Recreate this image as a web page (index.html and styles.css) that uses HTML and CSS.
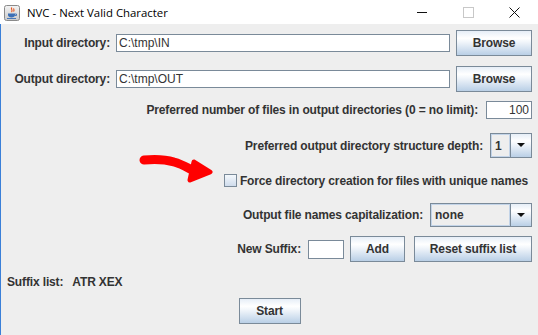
FILE: index.html
```html
<!DOCTYPE html>
<html lang="en">
<head>
    <meta charset="UTF-8">
    <title>NVC - Next Valid Character</title>
    <link rel="stylesheet" href="styles.css">
</head>
<body>
    <div class="window">
        <div class="titlebar">
            <svg class="app-icon" width="16" height="16" viewBox="0 0 16 16">
                <defs>
                    <linearGradient id="ig" x1="0" y1="0" x2="0" y2="1">
                        <stop offset="0" stop-color="#f4f4f4"/>
                        <stop offset="1" stop-color="#c9c9c9"/>
                    </linearGradient>
                </defs>
                <rect x="0.5" y="0.5" width="15" height="15" rx="2" fill="url(#ig)" stroke="#8a8a8a"/>
                <path d="M8 2.5c-2 1.5 1.5 2.5 -0.5 4.5M10 3.5c-1 1 1 1.5 -0.5 3" fill="none" stroke="#e8541c" stroke-width="1.1"/>
                <path d="M4 8.5h7v1.5c0 1.5-1.5 2.5-3.5 2.5S4 11.5 4 10z" fill="#3b6fb6"/>
                <path d="M11 9h1.5v1.5H11" fill="none" stroke="#3b6fb6" stroke-width="0.9"/>
                <path d="M3 13.5h9" stroke="#3b6fb6" stroke-width="0.9"/>
            </svg>
            <span class="title">NVC - Next Valid Character</span>
            <div class="controls">
                <span class="ctl ctl-min"></span>
                <span class="ctl ctl-max"></span>
                <svg class="ctl ctl-close" width="11" height="11" viewBox="0 0 11 11">
                    <path d="M0.5 0.5L10.5 10.5M10.5 0.5L0.5 10.5" stroke="#111" stroke-width="1"/>
                </svg>
            </div>
        </div>

        <div class="content">
            <div class="row row-input">
                <span class="label">Input directory:</span>
                <div class="field field-dir">C:\tmp\IN</div>
                <button class="btn btn-browse">Browse</button>
            </div>

            <div class="row row-output">
                <span class="label">Output directory:</span>
                <div class="field field-dir">C:\tmp\OUT</div>
                <button class="btn btn-browse">Browse</button>
            </div>

            <div class="row row-count">
                <span class="label">Preferred number of files in output directories (0 = no limit):</span>
                <div class="field field-num">100</div>
            </div>

            <div class="row row-depth">
                <span class="label">Preferred output directory structure depth:</span>
                <div class="combo combo-depth">
                    <span class="combo-value">1</span>
                    <span class="combo-arrow"></span>
                </div>
            </div>

            <div class="row row-check">
                <span class="checkbox"></span>
                <span class="label">Force directory creation for files with unique names</span>
            </div>

            <div class="row row-caps">
                <span class="label">Output file names capitalization:</span>
                <div class="combo combo-caps">
                    <span class="combo-value">none</span>
                    <span class="combo-arrow"></span>
                </div>
            </div>

            <div class="row row-suffix">
                <span class="label">New Suffix:</span>
                <div class="field field-suffix"></div>
                <button class="btn btn-add">Add</button>
                <button class="btn btn-reset">Reset suffix list</button>
            </div>

            <div class="row row-list">
                <span class="label">Suffix list:</span>
                <span class="label list-values">ATR XEX</span>
            </div>

            <div class="row row-start">
                <button class="btn btn-start">Start</button>
            </div>
        </div>

        <svg class="annotation" width="80" height="36" viewBox="0 0 80 36">
            <path d="M6 10C16 9 26 9 36 12C44 14 50 18 58 22" fill="none" stroke="#ff0000" stroke-width="9" stroke-linecap="round" stroke-linejoin="round"/>
            <path d="M56 12L72 22L52 30Z" fill="#ff0000" stroke="#ff0000" stroke-width="5" stroke-linejoin="round"/>
        </svg>
    </div>
</body>
</html>
```

FILE: styles.css
```css
body {
    margin: 0;
    padding: 0;
    background-color: #eeeeee;
    font-family: "Liberation Sans", Arial, sans-serif;
    font-size: 12px;
    color: #333333;
}

.window {
    position: relative;
    width: 538px;
    height: 335px;
    overflow: hidden;
    background-color: #eeeeee;
}

.titlebar {
    height: 24px;
    background-color: #fff;
    display: flex;
    align-items: center;
}

.app-icon {
    margin-left: 4px;
    margin-top: 1px;
}

.title {
    margin-left: 7px;
    font-family: "Open Sans", "Noto Sans", sans-serif;
    font-size: 11.4px;
    color: #000;
}

.controls {
    margin-left: auto;
    display: flex;
    align-items: center;
    height: 24px;
}

.ctl {
    display: block;
}

.ctl-min {
    width: 10px;
    height: 1px;
    background-color: #111;
    margin-right: 36px;
    margin-top: 1px;
}

.ctl-max {
    width: 9px;
    height: 9px;
    border: 1px solid #c8c8c8;
    margin-right: 35px;
}

.ctl-close {
    margin-right: 18px;
}

.content {
    height: 311px;
    border-left: 1px solid #3a7fd8;
    box-sizing: border-box;
    padding-top: 6px;
}

.row {
    display: flex;
    align-items: center;
    justify-content: flex-end;
    padding-right: 6px;
}

.label {
    font-weight: bold;
    white-space: nowrap;
    letter-spacing: -0.14px;
}

.field {
    box-sizing: border-box;
    background-color: #fff;
    border: 1px solid #7a8a99;
    font-size: 12px;
    padding: 0 2px;
    display: flex;
    align-items: center;
    white-space: nowrap;
}

.btn {
    box-sizing: border-box;
    height: 26px;
    border: 1px solid #7a8a99;
    background: linear-gradient(to bottom, #e6eef7 0%, #ffffff 30%, #f2f6fb 45%, #b9cfe6 100%);
    font-family: "Liberation Sans", Arial, sans-serif;
    font-size: 12px;
    font-weight: bold;
    letter-spacing: -0.14px;
    color: #333333;
    padding: 0;
    cursor: pointer;
}

.row-input {
    height: 26px;
}

.row-output {
    height: 26px;
    margin-top: 10px;
}

.field-dir {
    width: 334px;
    height: 18px;
    margin-left: 6px;
}

.btn-browse {
    width: 76px;
    margin-left: 6px;
}

.row-count {
    height: 18px;
    margin-top: 9px;
}

.field-num {
    width: 46px;
    height: 18px;
    margin-left: 8px;
    justify-content: flex-end;
}

.row-depth {
    height: 25px;
    margin-top: 14px;
}

.combo {
    box-sizing: border-box;
    height: 25px;
    border: 1px solid #7a8a99;
    display: flex;
    margin-left: 7px;
}

.combo-value {
    flex: 1;
    box-sizing: border-box;
    border: 1px solid #c3d4e8;
    background-color: #eeeeee;
    font-weight: bold;
    padding-left: 3px;
    display: flex;
    align-items: center;
}

.combo-arrow {
    position: relative;
    width: 20px;
    border-left: 1px solid #7a8a99;
    background: linear-gradient(to bottom, #e6eef7 0%, #ffffff 30%, #f2f6fb 45%, #b9cfe6 100%);
}

.combo-arrow::after {
    content: "";
    position: absolute;
    left: 6px;
    top: 9px;
    border-left: 4px solid transparent;
    border-right: 4px solid transparent;
    border-top: 4px solid #111;
}

.combo-depth {
    width: 42px;
}

.row-check {
    height: 19px;
    margin-top: 13px;
    padding-right: 10px;
}

.checkbox {
    box-sizing: border-box;
    width: 13px;
    height: 13px;
    border: 1px solid #7a8a99;
    background: linear-gradient(to bottom, #f4f8fc, #cfdcec);
    margin-right: 3px;
}

.row-caps {
    height: 24px;
    margin-top: 13px;
}

.combo-caps {
    width: 102px;
    height: 24px;
}

.row-suffix {
    height: 26px;
    margin-top: 9px;
}

.field-suffix {
    width: 36px;
    height: 19px;
    margin-left: 7px;
}

.btn-add {
    width: 55px;
    margin-left: 6px;
}

.btn-reset {
    width: 118px;
    margin-left: 9px;
}

.row-list {
    height: 16px;
    margin-top: 12px;
    justify-content: flex-start;
    padding-left: 6px;
}

.list-values {
    margin-left: 9px;
}

.row-start {
    height: 26px;
    margin-top: 8px;
    justify-content: center;
    padding-right: 0;
}

.btn-start {
    width: 62px;
}

.annotation {
    position: absolute;
    left: 138px;
    top: 150px;
}
```
